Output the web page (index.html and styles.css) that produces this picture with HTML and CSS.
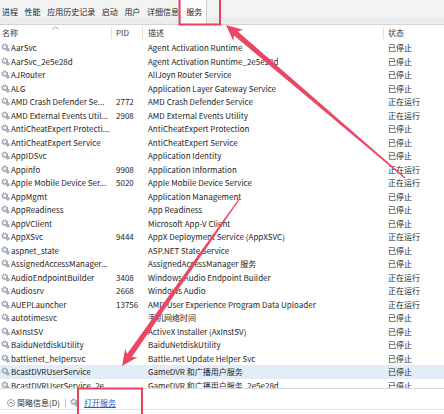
FILE: index.html
```
<!DOCTYPE html>
<html lang="zh-CN">
<head>
<meta charset="utf-8">
<title>任务管理器 - 服务</title>
<link rel="stylesheet" href="styles.css">
</head>
<body>
<svg class="defs" width="0" height="0" aria-hidden="true">
  <defs>
    <symbol id="svc" viewBox="0 0 10 10">
      <circle cx="4.2" cy="4.2" r="2.9" fill="none" stroke="#8d99a6" stroke-width="1.7" stroke-dasharray="1.25 1.03"/>
      <circle cx="4.2" cy="4.2" r="2.3" fill="none" stroke="#9aa7b4" stroke-width="1.1"/>
      <circle cx="4.2" cy="4.2" r="1" fill="#dfe6ee"/>
      <circle cx="7.6" cy="7.6" r="1.6" fill="#a9b6c3" stroke="#7f8c99" stroke-width="0.6"/>
    </symbol>
  </defs>
</svg>
<div class="tm">
  <div class="tabs">
    <span class="tab first">进程</span>
    <span class="tab">性能</span>
    <span class="tab">应用历史记录</span>
    <span class="tab">启动</span>
    <span class="tab">用户</span>
    <span class="tab">详细信息</span>
    <span class="tab sel">服务</span>
  </div>
  <div class="grid head">
    <div class="c n">名称<svg class="caret" width="7" height="4" viewBox="0 0 7 4"><path d="M0.5 3.5 L3.5 0.7 L6.5 3.5" fill="none" stroke="#9a9a9a" stroke-width="0.9"/></svg></div>
    <div class="c">PID</div>
    <div class="c">描述</div>
    <div class="c">状态</div>
  </div>
  <div class="list">
    <div class="grid row"><div class="c n"><svg class="ic"><use href="#svc"/></svg>AarSvc</div><div class="c"></div><div class="c">Agent Activation Runtime</div><div class="c">已停止</div></div>
    <div class="grid row"><div class="c n"><svg class="ic"><use href="#svc"/></svg>AarSvc_2e5e28d</div><div class="c"></div><div class="c">Agent Activation Runtime_2e5e28d</div><div class="c">已停止</div></div>
    <div class="grid row"><div class="c n"><svg class="ic"><use href="#svc"/></svg>AJRouter</div><div class="c"></div><div class="c">AllJoyn Router Service</div><div class="c">已停止</div></div>
    <div class="grid row"><div class="c n"><svg class="ic"><use href="#svc"/></svg>ALG</div><div class="c"></div><div class="c">Application Layer Gateway Service</div><div class="c">已停止</div></div>
    <div class="grid row"><div class="c n"><svg class="ic"><use href="#svc"/></svg>AMD Crash Defender Se...</div><div class="c">2772</div><div class="c">AMD Crash Defender Service</div><div class="c">正在运行</div></div>
    <div class="grid row"><div class="c n"><svg class="ic"><use href="#svc"/></svg>AMD External Events Util...</div><div class="c">2908</div><div class="c">AMD External Events Utility</div><div class="c">正在运行</div></div>
    <div class="grid row"><div class="c n"><svg class="ic"><use href="#svc"/></svg>AntiCheatExpert Protecti...</div><div class="c"></div><div class="c">AntiCheatExpert Protection</div><div class="c">已停止</div></div>
    <div class="grid row"><div class="c n"><svg class="ic"><use href="#svc"/></svg>AntiCheatExpert Service</div><div class="c"></div><div class="c">AntiCheatExpert Service</div><div class="c">已停止</div></div>
    <div class="grid row"><div class="c n"><svg class="ic"><use href="#svc"/></svg>AppIDSvc</div><div class="c"></div><div class="c">Application Identity</div><div class="c">已停止</div></div>
    <div class="grid row"><div class="c n"><svg class="ic"><use href="#svc"/></svg>Appinfo</div><div class="c">9908</div><div class="c">Application Information</div><div class="c">正在运行</div></div>
    <div class="grid row"><div class="c n"><svg class="ic"><use href="#svc"/></svg>Apple Mobile Device Ser...</div><div class="c">5020</div><div class="c">Apple Mobile Device Service</div><div class="c">正在运行</div></div>
    <div class="grid row"><div class="c n"><svg class="ic"><use href="#svc"/></svg>AppMgmt</div><div class="c"></div><div class="c">Application Management</div><div class="c">已停止</div></div>
    <div class="grid row"><div class="c n"><svg class="ic"><use href="#svc"/></svg>AppReadiness</div><div class="c"></div><div class="c">App Readiness</div><div class="c">已停止</div></div>
    <div class="grid row"><div class="c n"><svg class="ic"><use href="#svc"/></svg>AppVClient</div><div class="c"></div><div class="c">Microsoft App-V Client</div><div class="c">已停止</div></div>
    <div class="grid row"><div class="c n"><svg class="ic"><use href="#svc"/></svg>AppXSvc</div><div class="c">9444</div><div class="c">AppX Deployment Service (AppXSVC)</div><div class="c">正在运行</div></div>
    <div class="grid row"><div class="c n"><svg class="ic"><use href="#svc"/></svg>aspnet_state</div><div class="c"></div><div class="c">ASP.NET State Service</div><div class="c">已停止</div></div>
    <div class="grid row"><div class="c n"><svg class="ic"><use href="#svc"/></svg>AssignedAccessManager...</div><div class="c"></div><div class="c">AssignedAccessManager 服务</div><div class="c">已停止</div></div>
    <div class="grid row"><div class="c n"><svg class="ic"><use href="#svc"/></svg>AudioEndpointBuilder</div><div class="c">3408</div><div class="c">Windows Audio Endpoint Builder</div><div class="c">正在运行</div></div>
    <div class="grid row"><div class="c n"><svg class="ic"><use href="#svc"/></svg>Audiosrv</div><div class="c">2668</div><div class="c">Windows Audio</div><div class="c">正在运行</div></div>
    <div class="grid row"><div class="c n"><svg class="ic"><use href="#svc"/></svg>AUEPLauncher</div><div class="c">13756</div><div class="c">AMD User Experience Program Data Uploader</div><div class="c">正在运行</div></div>
    <div class="grid row"><div class="c n"><svg class="ic"><use href="#svc"/></svg>autotimesvc</div><div class="c"></div><div class="c">手机网络时间</div><div class="c">已停止</div></div>
    <div class="grid row"><div class="c n"><svg class="ic"><use href="#svc"/></svg>AxInstSV</div><div class="c"></div><div class="c">ActiveX Installer (AxInstSV)</div><div class="c">已停止</div></div>
    <div class="grid row"><div class="c n"><svg class="ic"><use href="#svc"/></svg>BaiduNetdiskUtility</div><div class="c"></div><div class="c">BaiduNetdiskUtility</div><div class="c">已停止</div></div>
    <div class="grid row"><div class="c n"><svg class="ic"><use href="#svc"/></svg>battlenet_helpersvc</div><div class="c"></div><div class="c">Battle.net Update Helper Svc</div><div class="c">已停止</div></div>
    <div class="grid row sel"><div class="c n"><svg class="ic"><use href="#svc"/></svg>BcastDVRUserService</div><div class="c"></div><div class="c">GameDVR 和广播用户服务</div><div class="c">已停止</div></div>
    <div class="grid row"><div class="c n"><svg class="ic"><use href="#svc"/></svg>BcastDVRUserService_2e...</div><div class="c"></div><div class="c">GameDVR 和广播用户服务_2e5e28d</div><div class="c">已停止</div></div>
  </div>
  <div class="foot">
    <svg class="fewer" width="8" height="8" viewBox="0 0 8 8"><circle cx="4" cy="4" r="3.5" fill="none" stroke="#8a8a8a" stroke-width="0.8"/><path d="M2.2 4.8 L4 3 L5.8 4.8" fill="none" stroke="#6a6a6a" stroke-width="0.9"/></svg>
    <span class="fewer-t">简略信息(D)</span>
    <span class="sep"></span>
    <svg class="ic fic"><use href="#svc"/></svg>
    <a class="open" href="#">打开服务</a>
  </div>
  <svg class="marks" width="444" height="414" viewBox="0 0 444 414" aria-hidden="true">
    <rect x="179.5" y="-2" width="40.5" height="26.5" fill="none" stroke="#e9415f" stroke-width="2"/>
    <rect x="78" y="388.5" width="64" height="30" fill="none" stroke="#e9415f" stroke-width="2"/>
    <polygon fill="#ec4665" points="226,25 243.1,29.7 237.8,31.4 405.4,177.5 404.6,178.5 234,35.6 233.3,41.1"/>
    <polygon fill="#ec4665" points="122,366 137.4,357.3 131.9,357.1 240.5,198.3 239.5,197.7 127.1,353.7 125.2,348.7"/>
  </svg>
</div>
</body>
</html>
```
FILE: styles.css
```
body {
  margin: 0;
  background: #ffffff;
  font-family: "Noto Sans CJK SC", "Noto Sans", sans-serif;
  font-size: 8px;
  color: #1e1e1e;
}

.defs {
  position: absolute;
  width: 0;
  height: 0;
}

.tm {
  position: relative;
  width: 444px;
  height: 414px;
  overflow: hidden;
  background: #ffffff;
}

.tabs {
  display: flex;
  height: 24px;
  background: linear-gradient(#f3f3f3 0, #f3f3f3 17px, #ececec 18px, #ececec 24px);
  border-bottom: 1px solid #d4d4d4;
}

.tab {
  padding: 0 3.3px;
  line-height: 24px;
  color: #262626;
  white-space: nowrap;
}

.tab.first {
  margin-left: -1.3px;
}

.tab.sel {
  margin-left: -2px;
  padding: 0 4px 0 5px;
  height: 25px;
  margin-bottom: -1px;
  background: #fbfbfb;
  border-left: 1px solid #dcdcdc;
  border-right: 1px solid #cfcfcf;
}

.grid {
  display: grid;
  grid-template-columns: 111px 31px 241px 1fr;
}

.c {
  border-left: 1px solid transparent;
  white-space: nowrap;
  overflow: hidden;
  padding-left: 4px;
}

.c:nth-child(3) {
  padding-left: 5px;
}

.c.n {
  border-left: 0;
}

.head {
  height: 16px;
}

.head .c {
  position: relative;
  height: 12px;
  margin-top: 2px;
  line-height: 12px;
  border-left-color: #e2e2e2;
  color: #3a3a3a;
}

.head .c.n {
  padding-left: 2px;
  overflow: visible;
}

.caret {
  position: absolute;
  left: 52px;
  top: -1.5px;
}

.list {
  height: 347px;
  overflow: hidden;
}

.row {
  height: 13.5px;
  line-height: 13.5px;
}

.row.sel {
  background: #e2edf9;
}

.row .c.n {
  display: flex;
  align-items: center;
  padding-left: 1px;
}

.ic {
  width: 9px;
  height: 9px;
  flex: none;
  margin-right: 1px;
}

.foot {
  display: flex;
  align-items: center;
  height: 13px;
  padding-top: 7px;
  border-top: 1px solid #dadada;
  border-bottom: 1px solid #e4e4e4;
  background: #ffffff;
}

.fewer {
  margin-left: 7px;
  flex: none;
}

.fewer-t {
  margin-left: 2px;
  color: #2a2a2a;
}

.sep {
  width: 1px;
  height: 9px;
  margin-left: 5px;
  background: #c9c9c9;
}

.fic {
  margin-left: 4px;
  margin-right: 0;
}

.open {
  margin-left: 5px;
  color: #1b63c7;
  text-decoration: underline;
}

.marks {
  position: absolute;
  left: 0;
  top: 0;
  pointer-events: none;
}
```
